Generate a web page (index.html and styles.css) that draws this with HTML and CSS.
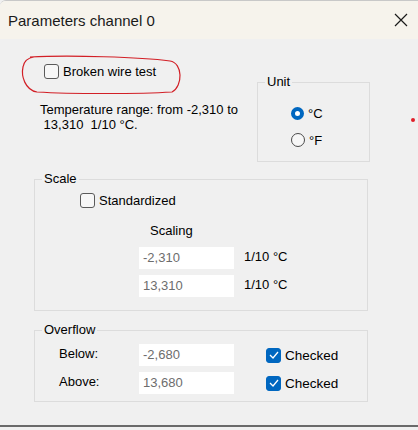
FILE: index.html
```html
<!DOCTYPE html>
<html>
<head>
    <meta charset="utf-8" />
    <title>Parameters channel 0</title>
    <link rel="stylesheet" href="styles.css">
</head>
<body>
    <div class="ventana">
        <div class="titulo">
            <span>Parameters channel 0</span>
            <svg class="cerrar" width="14" height="14" viewBox="0 0 14 14"><path d="M1 1 L13 13 M13 1 L1 13" stroke="#1a1a1a" stroke-width="1.2" fill="none" /></svg>
        </div>

        <div class="cuerpo">
            <!-- marca a mano sobre la captura -->
            <svg class="marca" width="418" height="430" viewBox="0 0 418 430">
                <path d="M30 57 C70 55, 140 57, 170 61 C183 63, 183 86, 172 92 C140 94, 70 94, 37 92 C25 90, 21 76, 23 67 C24 61, 27 58, 34 57" stroke="#d21f26" stroke-width="1.2" fill="none" />
                <circle cx="413" cy="120" r="2" fill="#e0202a" />
            </svg>

            <div class="fila-sup">
                <div class="col-izq">
                    <div class="chk-fila chk-broken"><span class="chk"></span>Broken wire test</div>
                    <p class="rango">Temperature range: from -2,310 to<br />&nbsp;13,310&nbsp; 1/10 °C.</p>
                </div>
                <fieldset class="grupo unidad">
                    <legend>Unit</legend>
                    <div class="radios">
                        <div class="radio-fila"><span class="radio sel"></span>°C</div>
                        <div class="radio-fila"><span class="radio"></span>°F</div>
                    </div>
                </fieldset>
            </div>

            <fieldset class="grupo escala">
                <legend>Scale</legend>
                <div class="chk-fila chk-std"><span class="chk"></span>Standardized</div>
                <div class="escalado">Scaling</div>
                <div class="campo-fila"><span class="campo">-2,310</span><span class="unid">1/10 °C</span></div>
                <div class="campo-fila"><span class="campo">13,310</span><span class="unid">1/10 °C</span></div>
            </fieldset>

            <fieldset class="grupo desborde">
                <legend>Overflow</legend>
                <div class="campo-fila">
                    <span class="etiq">Below:</span><span class="campo">-2,680</span>
                    <div class="chk-fila"><span class="chk marcado"><svg width="10" height="8" viewBox="0 0 10 8"><path d="M1 4 L4 7 L9 1" stroke="#fff" stroke-width="1.3" fill="none" /></svg></span>Checked</div>
                </div>
                <div class="campo-fila">
                    <span class="etiq">Above:</span><span class="campo">13,680</span>
                    <div class="chk-fila"><span class="chk marcado"><svg width="10" height="8" viewBox="0 0 10 8"><path d="M1 4 L4 7 L9 1" stroke="#fff" stroke-width="1.3" fill="none" /></svg></span>Checked</div>
                </div>
            </fieldset>
        </div>
    </div>
</body>
</html>
```

FILE: styles.css
```css
body {
    margin: 0;
    font-family: "Liberation Sans", Arial, sans-serif;
    font-size: 13px;
    color: #000000;
    background-color: #f0f0f0;
}

.ventana {
    width: 418px;
    height: 427px;
    border-top: 1px solid #c8c8c8;
    border-bottom: 2px solid #6a6a6a;
    background-color: #f0f0f0;
    border-top-left-radius: 6px;
    box-sizing: border-box;
    overflow: hidden;
}

.titulo {
    height: 38px;
    background-color: #f6f3ec;
    display: flex;
    align-items: center;
    justify-content: space-between;
    padding: 0 10px 0 8px;
    font-size: 15px;
    color: #1a1a1a;
}

.cuerpo {
    position: relative;
    padding: 0 50px 0 34px;
}
.marca {
    position: absolute;
    left: 0;
    top: -39px;
    pointer-events: none;
}

.fila-sup {
    display: flex;
    justify-content: space-between;
}
.col-izq {
    padding-top: 24px;
}
.chk-broken {
    margin-left: 10px;
}
.rango {
    margin: 23px 0 0 6px;
    line-height: 15px;
}

.chk-fila {
    display: flex;
    align-items: center;
    height: 16px;
}
.chk {
    width: 13px;
    height: 13px;
    border: 1px solid #5a5a5a;
    border-radius: 3px;
    background-color: #f7f7f7;
    margin-right: 4px;
    display: flex;
    align-items: center;
    justify-content: center;
}
.chk.marcado {
    background-color: #0067c0;
    border-color: #0067c0;
}

.grupo {
    margin: 0;
    padding: 0;
    border: 1px solid #dcdcdc;
}
.grupo legend {
    margin-left: 7px;
    padding: 0 2px;
    line-height: 16px;
}

.unidad {
    margin-top: 35px;
    margin-right: -2px;
    width: 113px;
    height: 88px;
    box-sizing: border-box;
}
.radios {
    padding: 16px 0 0 33px;
}
.radio-fila {
    display: flex;
    align-items: center;
    height: 14px;
    margin-bottom: 13px;
}
.radio {
    width: 12px;
    height: 12px;
    border: 1px solid #4a4a4a;
    border-radius: 50%;
    margin-right: 4px;
    background-color: #f7f7f7;
}
.radio.sel {
    width: 5px;
    height: 5px;
    border: 4.5px solid #0067c0;
    background-color: #ffffff;
}

.escala {
    margin-top: 9px;
    height: 140px;
    box-sizing: border-box;
}
.chk-std {
    margin: 5px 0 0 45px;
}
.escalado {
    margin: 15px 0 9px 115px;
}

.campo-fila {
    display: flex;
    align-items: center;
    margin-bottom: 6px;
}
.escala .campo {
    margin-left: 104px;
}
.campo {
    width: 91px;
    height: 22px;
    line-height: 22px;
    padding-left: 4px;
    background-color: #ffffff;
    color: #6d6d6d;
}
.unid {
    margin-left: 10px;
    margin-top: -4px;
}

.desborde {
    margin-top: 11px;
    height: 80px;
    box-sizing: border-box;
}
.desborde .campo-fila {
    margin-top: 6px;
    margin-bottom: 0;
}
.etiq {
    width: 80px;
    margin-left: 24px;
    margin-top: -4px;
}
.desborde .chk-fila {
    margin-left: 32px;
    font-size: 13.5px;
}
```
